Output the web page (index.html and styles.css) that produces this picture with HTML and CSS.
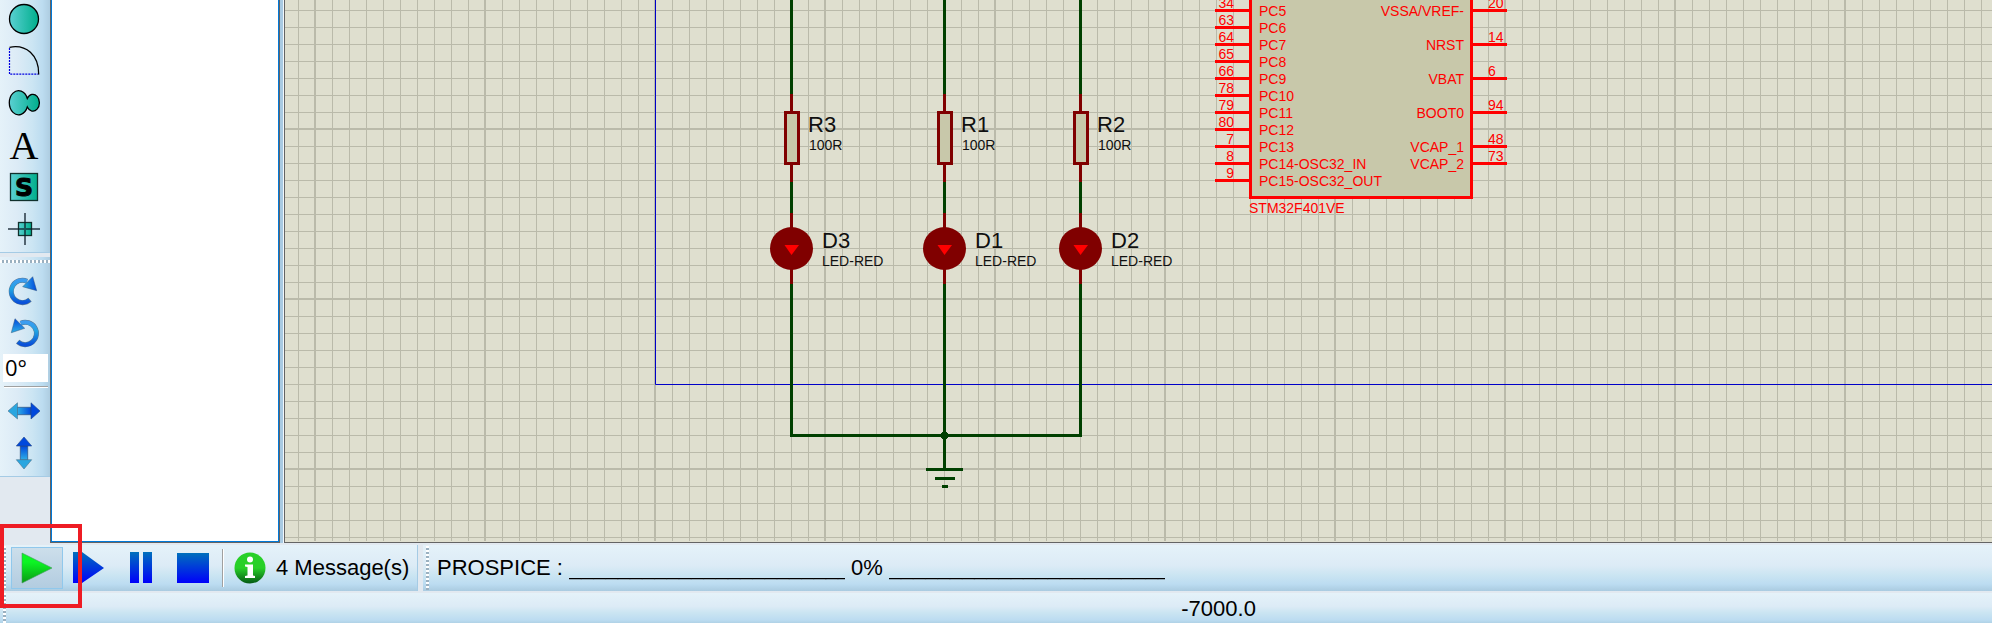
FILE: index.html
```
<!DOCTYPE html>
<html lang="en">
<head>
<meta charset="utf-8">
<title>Schematic Capture</title>
<link rel="stylesheet" href="styles.css">
</head>
<body>
<div class="app">
  <div class="workspace">
    <div class="tools">
      <div class="tool-group tool-group-draw">
        <button class="tool" aria-label="Circle"><svg width="48" height="42"><defs>
          <linearGradient id="teal"><stop offset="0" stop-color="#5ad0d2"/><stop offset="1" stop-color="#00ae8c"/></linearGradient>
          <linearGradient id="blueH"><stop offset="0" stop-color="#2fb0e6"/><stop offset="1" stop-color="#0048dc"/></linearGradient>
          <linearGradient id="blueV" x1="0" y1="1" x2="0" y2="0"><stop offset="0" stop-color="#2fb0e6"/><stop offset="1" stop-color="#0048dc"/></linearGradient>
          <linearGradient id="blueRing" x1="0" y1="0" x2="0" y2="1"><stop offset="0" stop-color="#3c9cf0"/><stop offset=".4" stop-color="#22a4e2"/><stop offset="1" stop-color="#0a50d8"/></linearGradient>
          </defs><circle cx="24" cy="21" r="14.5" fill="url(#teal)" stroke="#000" stroke-width="1.3"/></svg></button>
        <button class="tool" aria-label="Arc"><svg width="48" height="42"><path d="M9.5 8V34.2H38.5" fill="none" stroke="#0000e0" stroke-width="1.2" stroke-dasharray="2 1"/><path d="M9.5 7.3C26 4 39 15 38.7 34.5" fill="none" stroke="#000" stroke-width="1.3"/></svg></button>
        <button class="tool" aria-label="Closed path"><svg width="48" height="42"><path d="M27.3 16.5A9.3 12 0 1 0 27.3 25A6.5 8.4 0 1 0 27.3 16.5Z" fill="url(#teal)" stroke="#000" stroke-width="1.3"/></svg></button>
        <button class="tool" aria-label="Text"><svg width="48" height="42"><text class="letter-a" x="24" y="35" text-anchor="middle">A</text></svg></button>
        <button class="tool" aria-label="Symbol"><svg width="48" height="42"><rect x="10.5" y="7.5" width="27" height="27" fill="url(#teal)" stroke="#10302c" stroke-width="1.3"/><text class="letter-s" x="24" y="30" text-anchor="middle">S</text></svg></button>
        <button class="tool" aria-label="Marker"><svg width="48" height="42"><rect x="18.5" y="14.5" width="13" height="13" fill="url(#teal)" stroke="#10302c" stroke-width="1.3"/><path d="M8 21H40M25 5V37" stroke="#0d1c28" stroke-opacity=".65" stroke-width="2"/></svg></button>
      </div>
      <div class="tool-group">
        <div class="grip-row"></div>
        <button class="tool" aria-label="Rotate clockwise"><svg width="48" height="42"><path d="M27 11.2A11.2 11.2 0 1 0 30 29.7" fill="none" stroke="#5d7891" stroke-width="5"/><path d="M27 11.2A11.2 11.2 0 1 0 29.6 30" fill="none" stroke="url(#blueRing)" stroke-width="4"/><path d="M32.7 6.7L36.7 20.7L22.7 16.7Z" fill="url(#blueH)" stroke="#31557c" stroke-width=".5"/></svg></button>
        <button class="tool" aria-label="Rotate anticlockwise"><svg width="48" height="42"><path d="M20.7 11.2A11.2 11.2 0 1 1 17.7 29.7" fill="none" stroke="#5d7891" stroke-width="5"/><path d="M20.7 11.2A11.2 11.2 0 1 1 18 30" fill="none" stroke="url(#blueRing)" stroke-width="4"/><path d="M15 6.7L11.3 20.7L24.7 16.3Z" fill="url(#blueV)" stroke="#31557c" stroke-width=".5"/></svg></button>
        <input class="angle" type="text" value="0°" aria-label="Rotation angle">
        <div class="tool-rule"></div>
        <button class="tool" aria-label="Flip horizontally"><svg width="48" height="42"><path d="M17 17.3H31V24.7H17Z" fill="url(#blueH)" stroke="#2b4f7c" stroke-width=".7"/><path d="M8 21L17.5 12.8V29Z" fill="#2aa6e0" stroke="#50748c" stroke-width=".6"/><path d="M40 21L31 12.8V29Z" fill="#0048dc" stroke="#234785" stroke-width=".6"/></svg></button>
        <button class="tool" aria-label="Flip vertically"><svg width="48" height="42"><path d="M20.3 14H27.7V28H20.3Z" fill="url(#blueV)" stroke="#2b4f7c" stroke-width=".7"/><path d="M24 5L31.7 14H16.3Z" fill="#0048dc" stroke="#234785" stroke-width=".6"/><path d="M24 37L31.7 27.7H16.3Z" fill="#2aa6e0" stroke="#50748c" stroke-width=".6"/></svg></button>
      </div>
    </div>
    <div class="object-list"></div>
    <div class="splitter"></div>
    <div class="canvas">
      <svg class="sheet" width="100%" height="100%">
        <defs>
          <pattern id="minor" width="17" height="17" patternUnits="userSpaceOnUse" x="298" y="10"><path d="M0 .5H17M.5 0V17" stroke="#babaaa" stroke-width="1"/></pattern>
          <pattern id="major" width="170" height="170" patternUnits="userSpaceOnUse" x="314" y="128"><path d="M0 1H170M1 0V170" stroke="#babaaa" stroke-width="2"/></pattern>
          <g id="branch">
            <path d="M0 0V435" stroke="#004000" stroke-width="3"/>
            <path d="M0 94V182M0 213V284" stroke="#800000" stroke-width="3"/>
            <rect x="-6" y="112.5" width="13" height="51" fill="#c8c8aa" stroke="#800000" stroke-width="3"/>
            <circle cy="248.5" r="21.5" fill="#800000"/>
            <path d="M-7 245H7.5L0 255Z" fill="#f00"/>
          </g>
        </defs>
        <g transform="translate(-285 0)">
          <rect width="100%" height="541" x="285" fill="url(#minor)"/>
          <rect width="100%" height="541" x="285" fill="url(#major)"/>
          <path d="M655.5 0V384.5H9000" fill="none" stroke="#0000c8"/>
          <use href="#branch" x="791.5"/>
          <use href="#branch" x="944.5"/>
          <use href="#branch" x="1080.5"/>
          <path d="M790 435.5H1082M944.5 435V470M926 469.5H963M935 478.5H955M942 486.5H948" stroke="#004000" stroke-width="3"/>
          <path d="M942 432H947V433H948V438H947V439H942V438H941V433H942Z" fill="#004000"/>
          <g class="ref"><text x="808" y="132">R3</text><text x="961" y="132">R1</text><text x="1097" y="132">R2</text>
            <text x="822" y="248">D3</text><text x="975" y="248">D1</text><text x="1111" y="248">D2</text></g>
          <g class="value"><text x="809" y="150">100R</text><text x="962" y="150">100R</text><text x="1098" y="150">100R</text>
            <text x="822" y="266">LED-RED</text><text x="975" y="266">LED-RED</text><text x="1111" y="266">LED-RED</text></g>
          <rect x="1250.5" y="-10" width="221" height="207.5" fill="#c8c8aa" stroke="#f00" stroke-width="3"/>
          <path d="M1215 10.5h34m-34 17h34m-34 17h34m-34 17h34m-34 17h34m-34 17h34m-34 17h34m-34 17h34m-34 17h34m-34 17h34m-34 17h34M1473 10.5h34m-34 34h34m-34 34h34m-34 34h34m-34 34h34m-34 17h34" stroke="#f00" stroke-width="3"/>
          <g class="pin">
            <text x="1259" y="16">PC5</text><text x="1259" y="33">PC6</text><text x="1259" y="50">PC7</text><text x="1259" y="67">PC8</text><text x="1259" y="84">PC9</text><text x="1259" y="101">PC10</text><text x="1259" y="118">PC11</text><text x="1259" y="135">PC12</text><text x="1259" y="152">PC13</text><text x="1259" y="169">PC14-OSC32_IN</text><text x="1259" y="186">PC15-OSC32_OUT</text>
            <text x="1249" y="213">STM32F401VE</text>
            <text x="1488" y="8">20</text><text x="1488" y="42">14</text><text x="1488" y="76">6</text><text x="1488" y="110">94</text><text x="1488" y="144">48</text><text x="1488" y="161">73</text>
          </g>
          <g class="pin pin-end">
            <text x="1234" y="8">34</text><text x="1234" y="25">63</text><text x="1234" y="42">64</text><text x="1234" y="59">65</text><text x="1234" y="76">66</text><text x="1234" y="93">78</text><text x="1234" y="110">79</text><text x="1234" y="127">80</text><text x="1234" y="144">7</text><text x="1234" y="161">8</text><text x="1234" y="178">9</text>
            <text x="1464" y="16">VSSA/VREF-</text><text x="1464" y="50">NRST</text><text x="1464" y="84">VBAT</text><text x="1464" y="118">BOOT0</text><text x="1464" y="152">VCAP_1</text><text x="1464" y="169">VCAP_2</text>
          </g>
        </g>
      </svg>
    </div>
  </div>
  <div class="simbar">
    <div class="band band-controls">
      <div class="grip"></div>
      <button class="sim sim-active" aria-label="Run"><svg width="52" height="42"><defs>
        <linearGradient id="green" x1="0" y1="0" x2="0" y2="1"><stop offset=".3" stop-color="#0cf524"/><stop offset="1" stop-color="#0a9a14"/></linearGradient>
        <linearGradient id="navy" x1="0" y1="0" x2="0" y2="1"><stop offset="0" stop-color="#0070bc"/><stop offset="1" stop-color="#0000fa"/></linearGradient>
        <linearGradient id="info" x1="0" y1="0" x2="0" y2="1"><stop offset=".5" stop-color="#28d028"/><stop offset="1" stop-color="#055a14"/></linearGradient>
        </defs><path d="M11 6L41 21L11 36Z" fill="url(#green)" stroke="#3f9a5c" stroke-width=".6"/></svg></button>
      <button class="sim" aria-label="Step"><svg width="52" height="42"><path d="M10 5H18V36H10ZM19 5L41 21L19 36Z" fill="url(#navy)"/><path d="M18.5 5V36" stroke="#0a48a0"/></svg></button>
      <button class="sim sim-narrow" aria-label="Pause"><svg width="48" height="42"><path d="M15 5H24V36H15ZM28 5H37V36H28Z" fill="url(#navy)"/></svg></button>
      <button class="sim sim-narrow" aria-label="Stop"><svg width="48" height="42"><path d="M14 6H46V36H14Z" fill="url(#navy)"/></svg></button>
      <div class="divider"></div>
      <button class="messages"><svg width="32" height="32"><circle cx="16" cy="16" r="15.5" fill="url(#info)"/><circle cx="16" cy="7.5" r="3" fill="#fff"/><path d="M11 12.5H19V23.5L21 24V26H11V24L13.5 23.5V15L11 14.5Z" fill="#fff"/></svg>4 Message(s)</button>
    </div>
    <div class="band band-status">
      <div class="grip"></div>
      <span class="label">PROSPICE :</span>
      <span class="blank">_______________________</span>
      <span class="label">0%</span>
      <span class="blank">_______________________</span>
    </div>
    <div class="highlight"></div>
  </div>
  <div class="coords"><div class="grip"></div><span class="coord">-7000.0</span></div>
</div>
</body>
</html>
```
FILE: styles.css
```
* { box-sizing: border-box; }
body { margin: 0; background: #e2e9f0; color: #000; font-family: "Liberation Sans", Arial, sans-serif; font-size: 22px; }
button { border: 0; padding: 0; background: none; font: inherit; color: inherit; }
svg { display: block; }
.app { height: 100vh; display: flex; flex-direction: column; overflow: hidden; }
.workspace { flex: 1; min-height: 0; display: flex; }

.tools { width: 50px; display: flex; flex-direction: column; gap: 4px; overflow: hidden; }
.tool-group { display: flex; flex-direction: column; align-items: flex-start; padding-bottom: 2px; border-bottom: 1px solid #a5cbe5; background: linear-gradient(90deg, #e5f2f9 0, #dcebf6 35%, #cbe5f3 65%, #bcdcf0 85%, #aecde1 100%); }
.tool-group-draw { height: 253px; justify-content: flex-end; overflow: hidden; }
.tool { width: 48px; height: 42px; flex: none; }
.letter-a { font: 40px "Liberation Serif", serif; }
.letter-s { font: bold 25px "DejaVu Sans", sans-serif; stroke: #000; stroke-width: 1px; }
.grip-row { width: 100%; height: 3px; margin: 3px 0 7px; background: repeating-linear-gradient(90deg, #fff 0 2px, #9ab0c0 2px 4px); }
.angle { width: 45px; height: 28px; margin-left: 3px; padding: 0 2px 2px; border: 0; background: #fff; color: #000; font: 22px/24px "Open Sans", "Noto Sans", sans-serif; }
.tool-rule { width: 44px; height: 2px; margin: 4px 0 2px 4px; border-top: 1px solid #a0a0a0; background: #fff; }

.object-list { width: 230px; border: solid #646464; border-width: 0 1px 1px; background: #fff; box-shadow: inset 1px 0 #0078d7, inset -1px -1px #0078d7; }
.splitter { width: 4px; background: linear-gradient(90deg, #a9cae2 75%, #f2f8fc 75%); }
.canvas { flex: 1; min-width: 0; border: solid #646464; border-width: 0 0 1px 1px; background: #dfdfcf; }
.ref { font-size: 22px; fill: #101010; }
.value { font-size: 14px; fill: #101010; }
.pin { font-size: 14px; fill: #f00; }
.pin-end { text-anchor: end; }

.simbar { position: relative; display: flex; gap: 5px; padding: 2px 0; }
.band { height: 46px; display: flex; align-items: center; background: linear-gradient(#e5f2f9, #dcebf6 45%, #cbe5f2 65%, #bcdcf1 85%, #aacbe0); }
.band-controls { width: 418px; border-right: 1px solid #a5cbe5; }
.band-status { flex: 1; }
.grip { flex: none; width: 3px; height: 44px; margin: 0 5px 0 3px; background: repeating-linear-gradient(#fff 0 2px, #9ab0c0 2px 4px); }
.sim { width: 52px; height: 42px; flex: none; }
.sim-narrow { width: 48px; }
.sim-active { background: linear-gradient(#cddfeb, #b2cce0); box-shadow: inset 0 0 0 1px #90c8ec; }
.divider { width: 2px; height: 38px; margin: 0 10px 0 11px; border-left: 1px solid #a0a0a0; background: #fff; }
.messages { display: flex; align-items: center; gap: 10px; white-space: nowrap; }
.band-status .grip { margin-right: 8px; }
.band-status .label { white-space: nowrap; }
.band-status .blank { width: 276px; margin: 0 6px; overflow: hidden; white-space: nowrap; }
.highlight { position: absolute; left: 0; top: -19px; width: 82px; height: 84px; border: 4px solid #ee1c24; pointer-events: none; }
.coords { height: 30px; display: flex; align-items: center; background: linear-gradient(#e5f2f9, #dcebf6 45%, #cbe5f2 65%, #bcdcf1 90%, #b0d2e6); }
.coords .grip { height: 30px; margin-right: 0; }
.coord { margin-left: 59%; padding-top: 2px; line-height: 28px; }
```
